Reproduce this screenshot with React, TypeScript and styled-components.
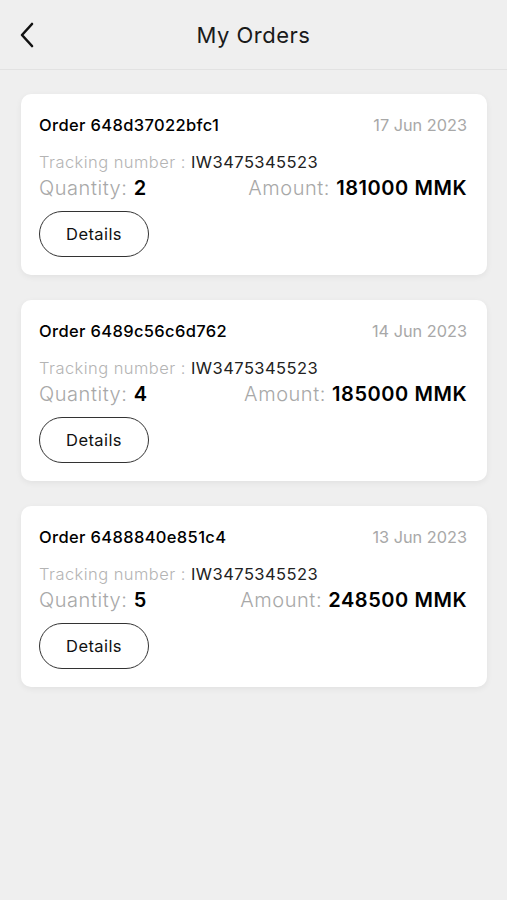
import React from 'react';
import styled, { createGlobalStyle } from 'styled-components';

const GlobalStyle = createGlobalStyle`
  html, body {
    margin: 0;
    padding: 0;
    background: #efefef;
  }
  body {
    font-family: Inter, "Noto Sans", "Liberation Sans", sans-serif;
    color: #111;
  }
`;

type Order = {
  id: string;
  date: string;
  tracking: string;
  quantity: number;
  amount: string;
};

const orders: Order[] = [
  { id: '648d37022bfc1', date: '17 Jun 2023', tracking: 'IW3475345523', quantity: 2, amount: '181000 MMK' },
  { id: '6489c56c6d762', date: '14 Jun 2023', tracking: 'IW3475345523', quantity: 4, amount: '185000 MMK' },
  { id: '6488840e851c4', date: '13 Jun 2023', tracking: 'IW3475345523', quantity: 5, amount: '248500 MMK' },
];

const App: React.FC = () => {
  return (
    <>
      <GlobalStyle />
      <Screen>
        <Header>
          <BackButton aria-label="Back">
            <svg width="16" height="26" viewBox="0 0 16 26" fill="none">
              <path d="M13 2 L3 13 L13 24" stroke="#111" strokeWidth="2.6" strokeLinecap="round" strokeLinejoin="round" />
            </svg>
          </BackButton>
          <Title>My Orders</Title>
        </Header>
        <List>
          {orders.map((o) => (
            <Card key={o.id}>
              <TopRow>
                <OrderId>Order {o.id}</OrderId>
                <DateText>{o.date}</DateText>
              </TopRow>
              <Tracking>
                <Muted>Tracking number : </Muted>
                <TrackingValue>{o.tracking}</TrackingValue>
              </Tracking>
              <InfoRow>
                <span>
                  <InfoLabel>Quantity: </InfoLabel>
                  <InfoValue>{o.quantity}</InfoValue>
                </span>
                <span>
                  <InfoLabel>Amount: </InfoLabel>
                  <InfoValue>{o.amount}</InfoValue>
                </span>
              </InfoRow>
              <DetailsButton>Details</DetailsButton>
            </Card>
          ))}
        </List>
      </Screen>
    </>
  );
};

const Screen = styled.div`
  min-height: 900px;
  background: #efefef;
`;

const Header = styled.header`
  height: 69px;
  display: flex;
  align-items: center;
  justify-content: center;
  position: relative;
  border-bottom: 1px solid #e2e2e2;
`;

const BackButton = styled.button`
  position: absolute;
  left: 19px;
  top: 22px;
  background: none;
  border: none;
  padding: 0;
  display: flex;
`;

const Title = styled.h1`
  margin: 0;
  font-family: Inter, "Liberation Sans", sans-serif;
  font-size: 22px;
  font-weight: 400;
  color: #1a1a1a;
  letter-spacing: 0.5px;
`;

const List = styled.div`
  display: flex;
  flex-direction: column;
  gap: 25px;
  padding: 24px 20px 0 21px;
`;

const Card = styled.div`
  background: #fff;
  border-radius: 10px;
  box-shadow: 0 2px 6px rgba(0, 0, 0, 0.06);
  padding: 22px 20px 18px 18px;
  height: 181px;
  box-sizing: border-box;
  display: flex;
  flex-direction: column;
`;

const TopRow = styled.div`
  display: flex;
  justify-content: space-between;
  align-items: center;
  height: 18px;
`;

const OrderId = styled.span`
  font-size: 16.5px;
  font-weight: 500;
  letter-spacing: 0.35px;
  color: #000;
`;

const DateText = styled.span`
  font-size: 16.3px;
  font-weight: 400;
  color: #a8a8a8;
`;

const Tracking = styled.div`
  margin-top: 19px;
  font-size: 16.5px;
  letter-spacing: 0.45px;
  line-height: 18px;
`;

const Muted = styled.span`
  color: #b4b4b4;
  font-weight: 300;
`;

const TrackingValue = styled.span`
  color: #222;
  font-weight: 400;
`;

const InfoRow = styled.div`
  display: flex;
  justify-content: space-between;
  align-items: baseline;
  margin-top: 6px;
  font-size: 20px;
  letter-spacing: 0.55px;
  line-height: 22px;
`;

const InfoLabel = styled.span`
  color: #a8a8a8;
  font-weight: 300;
`;

const InfoValue = styled.span`
  color: #000;
  font-weight: 600;
`;

const DetailsButton = styled.button`
  margin-top: 12px;
  width: 110px;
  height: 47px;
  border: 1.5px solid #333;
  border-radius: 24px;
  background: #fff;
  font-family: Inter, "Liberation Sans", sans-serif;
  font-size: 16.5px;
  letter-spacing: 0.4px;
  font-weight: 400;
  color: #111;
  padding: 0;
`;

export default App;
